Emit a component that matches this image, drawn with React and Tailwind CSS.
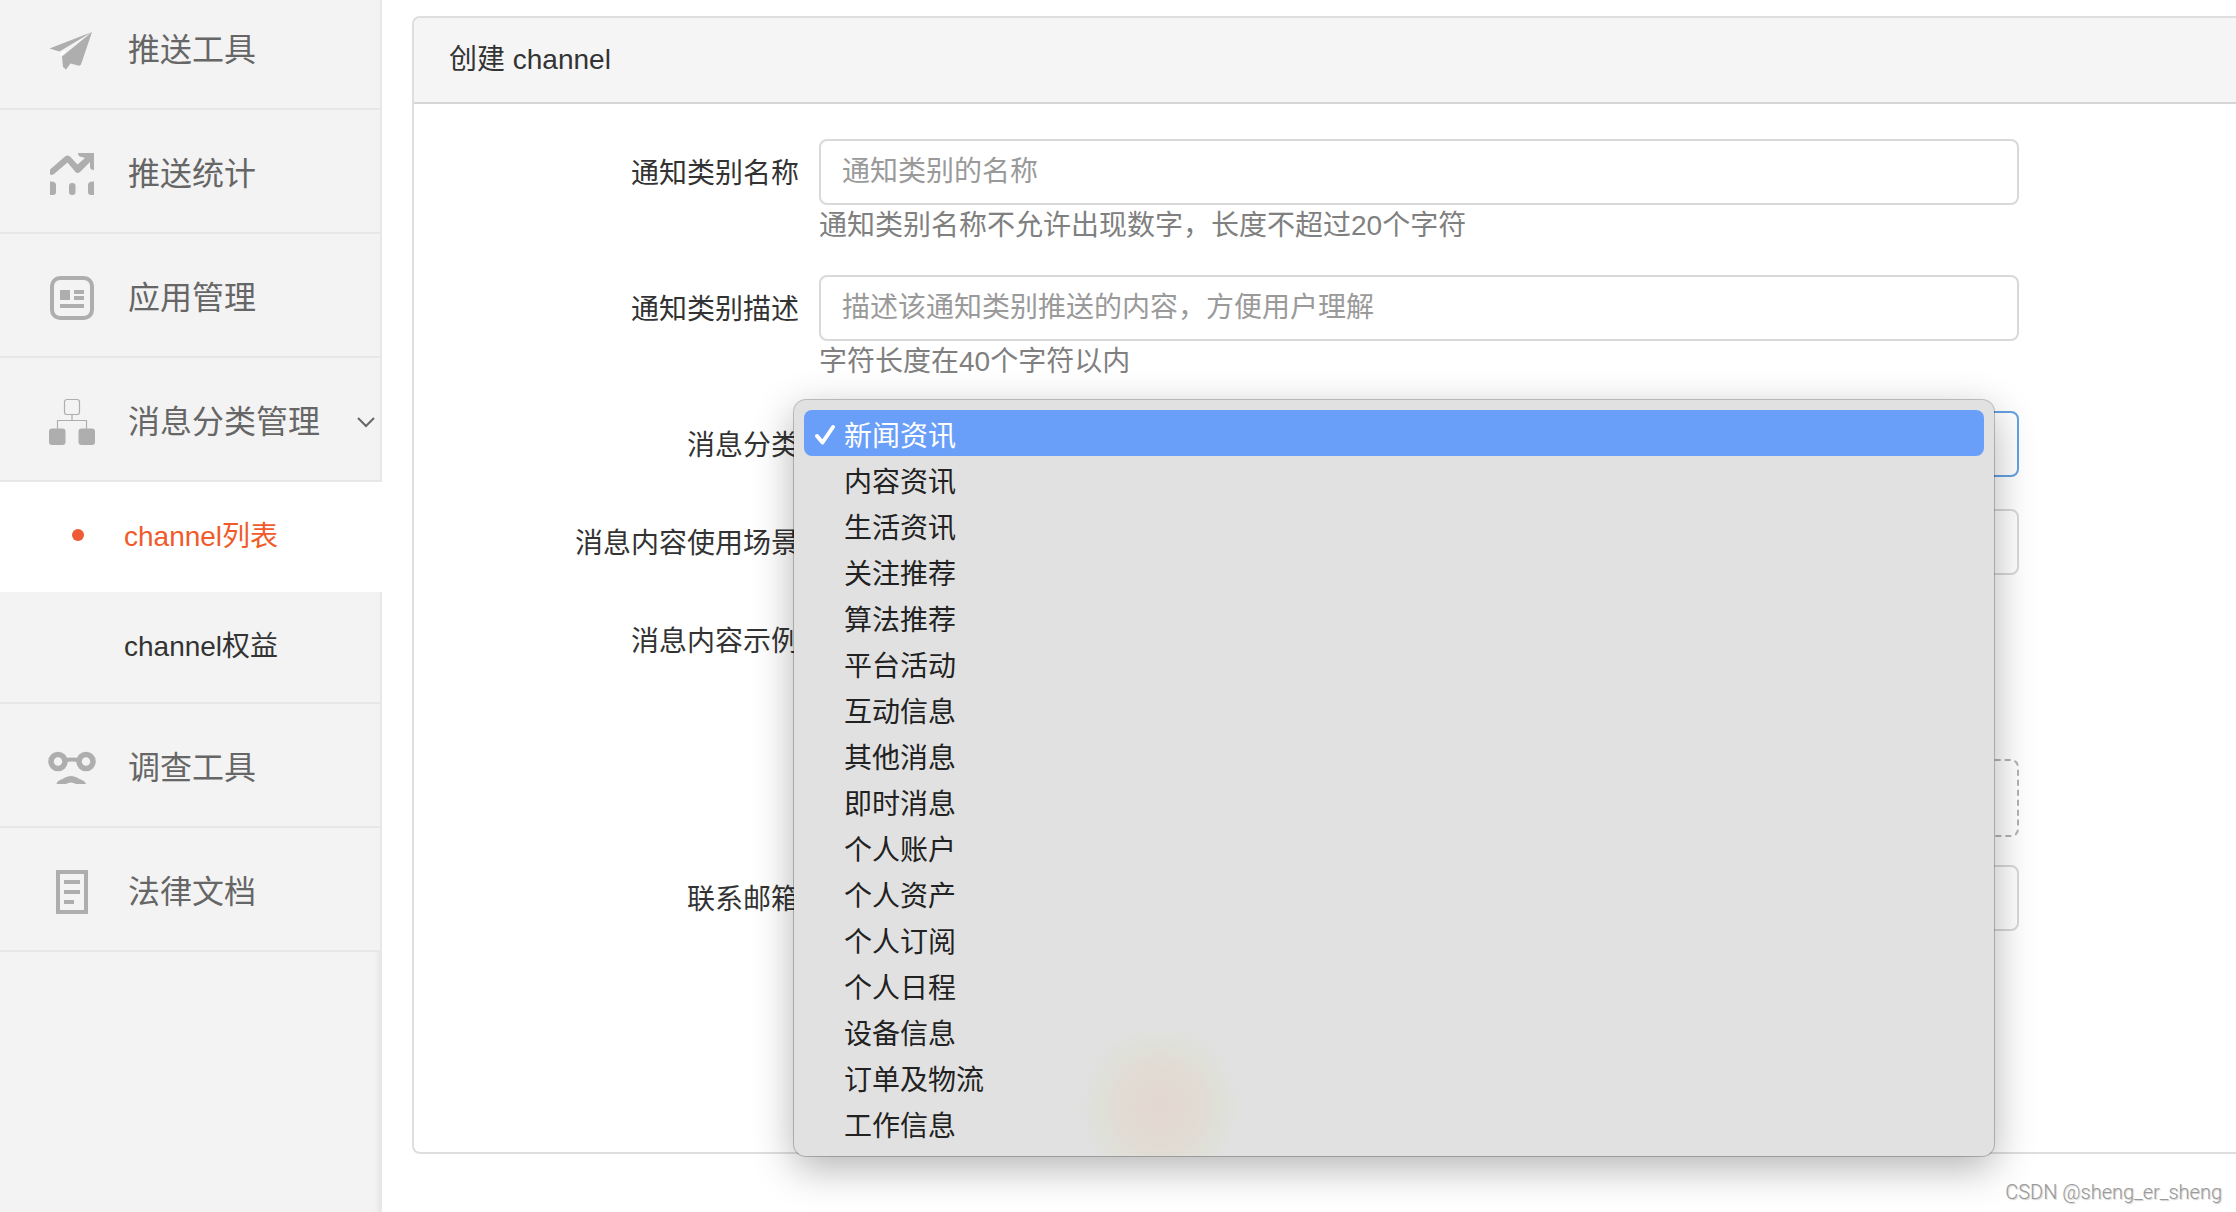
import { useState } from "react";
import clsx from "clsx";

function PlaneIcon() {
  return (
    <svg viewBox="0 0 48 48" className="size-12 shrink-0" fill="#aeaeae">
      <path d="M44 6 L1.5 22.5 L11.5 25.5 Z" />
      <path d="M44 6 L33 38.5 Q32 40 30 39.5 L22.5 37.5 L18 43.5 L15 41 L14 30.5 Z" />
      <path d="M12 29 L17 25" stroke="#fff" strokeWidth="2" />
    </svg>
  );
}

function StatsIcon() {
  return (
    <svg viewBox="0 0 48 48" className="size-12 shrink-0" fill="#aeaeae">
      <path d="M2 19.5 L17 6.5 Q19.5 4.5 22 6.5 L29.5 14.5 L37 8 L34 7 Q30 7 30 3 L46 3 L46 20 Q42 20 42 17 L42 12 L32 22 Q29.5 24 27.5 22 L19.5 12.5 L6 24 Q3 26 2 24 Z" />
      <path d="M2 31.5 Q8 31 8 35 V42 Q8 45 5 45 H2 Z" />
      <rect x="21" y="33" width="6.5" height="12" rx="3" />
      <path d="M46 31.5 Q40 31 40 35 V42 Q40 45 43 45 H46 Z" />
    </svg>
  );
}

function AppIcon() {
  return (
    <svg viewBox="0 0 48 48" className="size-12 shrink-0" fill="#aeaeae">
      <rect x="4" y="4" width="40" height="40" rx="8" fill="none" stroke="#aeaeae" strokeWidth="4" />
      <rect x="12" y="16" width="10" height="10" />
      <rect x="26" y="16" width="10" height="4" />
      <rect x="26" y="22" width="10" height="4" />
      <rect x="12" y="30" width="24" height="4" />
    </svg>
  );
}

function TreeIcon() {
  return (
    <svg viewBox="0 0 48 48" className="size-12 shrink-0" fill="#aeaeae">
      <rect x="16.5" y="1.5" width="15" height="15" rx="2.5" fill="none" stroke="#aeaeae" strokeWidth="1.2" />
      <path d="M24 17 V22.5 M9.5 31 V22.5 H38.5 V31" fill="none" stroke="#aeaeae" strokeWidth="1.2" />
      <rect x="1" y="30.5" width="16.5" height="16.5" rx="3" />
      <rect x="30.5" y="30.5" width="16.5" height="16.5" rx="3" />
    </svg>
  );
}

function SurveyIcon() {
  return (
    <svg viewBox="0 0 48 48" className="size-12 shrink-0" fill="none" stroke="#aeaeae">
      <circle cx="10" cy="17.5" r="7" strokeWidth="5.5" />
      <circle cx="38" cy="17.5" r="7" strokeWidth="5.5" />
      <path d="M16 16.5 Q24 14.5 32 16.5" strokeWidth="4" />
      <path d="M8.5 40 C9 36 14 36 17 33.5 Q23 30.5 29 33.5 C32 36 37 36 38 40 H28 Q23 37 18 40 Z" fill="#aeaeae" stroke="none" />
    </svg>
  );
}

function DocIcon() {
  return (
    <svg viewBox="0 0 48 48" className="size-12 shrink-0" fill="#aeaeae">
      <rect x="10" y="4" width="28" height="40" fill="none" stroke="#aeaeae" strokeWidth="4" />
      <rect x="16" y="12" width="16" height="4" />
      <rect x="16" y="22" width="16" height="4" />
      <rect x="16" y="32" width="10" height="4" />
    </svg>
  );
}

const menu = [
  { label: "推送工具", icon: PlaneIcon },
  { label: "推送统计", icon: StatsIcon },
  { label: "应用管理", icon: AppIcon },
  { label: "消息分类管理", icon: TreeIcon, children: ["channel列表", "channel权益"] },
  { label: "调查工具", icon: SurveyIcon },
  { label: "法律文档", icon: DocIcon },
];

const categories = [
  "新闻资讯",
  "内容资讯",
  "生活资讯",
  "关注推荐",
  "算法推荐",
  "平台活动",
  "互动信息",
  "其他消息",
  "即时消息",
  "个人账户",
  "个人资产",
  "个人订阅",
  "个人日程",
  "设备信息",
  "订单及物流",
  "工作信息",
];

const inputClass =
  "block h-[66px] w-full rounded-lg border-2 border-[#d9d9d9] bg-white px-[21px] text-[28px] text-[#333] outline-none placeholder:text-[#9a9a9a]";

function Sidebar() {
  const [active, setActive] = useState("channel列表");

  return (
    <aside className="flex w-[382px] shrink-0 flex-col border-r-2 border-[#e7e7e7] bg-[#f3f3f3]">
      <nav className="-mt-[14px]">
        {menu.map(({ label, icon: Icon, children }) => (
          <div key={label}>
            <a href="#" className="flex h-[124px] items-center gap-8 border-b-2 border-[#e7e7e7] pt-[6px] pr-1 pl-12 text-[32px] text-[#666]">
              <Icon />
              <span className="whitespace-nowrap">{label}</span>
              {children && (
                <svg viewBox="0 0 20 12" className="ml-auto w-5" fill="none" stroke="#666" strokeWidth="2">
                  <path d="M2 2 L10 10 L18 2" />
                </svg>
              )}
            </a>
            {children && (
              <div className="border-b-2 border-[#e7e7e7]">
                {children.map((child) => (
                  <a
                    key={child}
                    href="#"
                    onClick={() => setActive(child)}
                    className={clsx(
                      "flex h-[110px] items-center text-[28px]",
                      child === active ? "-mr-[2px] bg-white text-[#f15a29]" : "text-[#333]"
                    )}
                  >
                    <span className={clsx("mr-10 mb-1 ml-[72px] size-3 rounded-full", child === active && "bg-[#ed5a35]")} />
                    {child}
                  </a>
                ))}
              </div>
            )}
          </div>
        ))}
      </nav>
      <div className="flex-1 shadow-[inset_-6px_0_6px_-5px_rgba(0,0,0,0.08)]" />
    </aside>
  );
}

function Field({ id, label, help, className = "mb-8", children }) {
  return (
    <div className={clsx("flex gap-5", className)}>
      <label htmlFor={id} className="h-[66px] w-[385px] shrink-0 text-right leading-[70px] text-[#333]">
        {label}
      </label>
      <div className="relative flex-1">
        {children}
        {help && <p className="pt-1 leading-[34px] text-[#808080]">{help}</p>}
      </div>
    </div>
  );
}

function CategoryMenu({ value, onChange }) {
  return (
    <div
      role="listbox"
      className="absolute -top-[11px] right-[25px] -left-[25px] z-10 rounded-xl bg-[#e1e1e1] bg-[radial-gradient(circle_80px_at_366px_707px,#e4d7d1,#e1dbd3_50%,#dfe0d9_80%,#e1e1e1)] p-[10px] shadow-[0_0_0_1px_rgba(0,0,0,0.22),0_12px_40px_rgba(0,0,0,0.3)]"
    >
      {categories.map((category) => {
        const selected = category === value;
        return (
          <button
            key={category}
            type="button"
            role="option"
            aria-selected={selected}
            onClick={() => onChange(category)}
            className={clsx(
              "flex h-[46px] w-full items-center rounded-lg pt-2 text-left",
              selected ? "bg-[#699ef9] text-white" : "text-[#222]"
            )}
          >
            <span className="mb-1 flex w-10 shrink-0 pl-[10px]">
              {selected && (
                <svg viewBox="0 0 22 22" className="w-[22px]" fill="none" stroke="#fff" strokeWidth="4" strokeLinecap="round" strokeLinejoin="round">
                  <path d="M3 12 L8.5 18.5 L19 3" />
                </svg>
              )}
            </span>
            {category}
          </button>
        );
      })}
    </div>
  );
}

export default function App() {
  const [category, setCategory] = useState("新闻资讯");

  return (
    <div className="relative flex min-h-screen overflow-hidden bg-white font-['Liberation_Sans','Noto_Sans_CJK_SC',sans-serif] text-[28px]">
      <Sidebar />

      <main className="flex-1 pt-4 pl-[30px]">
        <section className="rounded-l-lg border-2 border-r-0 border-[#dedede]">
          <h1 className="flex h-[86px] items-center rounded-tl-md border-b-2 border-[#d6d6d6] bg-[#f5f5f5] px-[35px] text-[#333]">
            创建 channel
          </h1>

          <form className="pt-[35px] pr-[217px] pb-[221px]">
            <Field id="name" label="通知类别名称" help="通知类别名称不允许出现数字，长度不超过20个字符">
              <input id="name" type="text" placeholder="通知类别的名称" className={inputClass} />
            </Field>
            <Field id="description" label="通知类别描述" help="字符长度在40个字符以内">
              <input id="description" type="text" placeholder="描述该通知类别推送的内容，方便用户理解" className={inputClass} />
            </Field>
            <Field id="category" label="消息分类">
              <select
                id="category"
                value={category}
                onChange={(event) => setCategory(event.target.value)}
                className="block h-[66px] w-full appearance-none rounded-lg border-2 border-[#64a2e2] bg-white px-5 text-[#333] outline-none"
              >
                {categories.map((item) => (
                  <option key={item}>{item}</option>
                ))}
              </select>
              <CategoryMenu value={category} onChange={setCategory} />
            </Field>
            <Field id="scene" label="消息内容使用场景">
              <input id="scene" type="text" className={inputClass} />
            </Field>
            <Field id="sample" label="消息内容示例" className="mb-7">
              <button id="sample" type="button" className="mt-[152px] block h-[78px] w-full rounded-lg border-2 border-dashed border-[#b3b3b3]" />
            </Field>
            <Field id="email" label="联系邮箱" className="mb-0">
              <input id="email" type="email" className={inputClass} />
            </Field>
          </form>
        </section>
      </main>

      <p className="absolute right-[14px] bottom-2 font-[Roboto] text-[20px] leading-6 font-light text-[#999] [text-shadow:1px_1px_1px_rgba(0,0,0,0.2)]">
        CSDN @sheng_er_sheng
      </p>
    </div>
  );
}
